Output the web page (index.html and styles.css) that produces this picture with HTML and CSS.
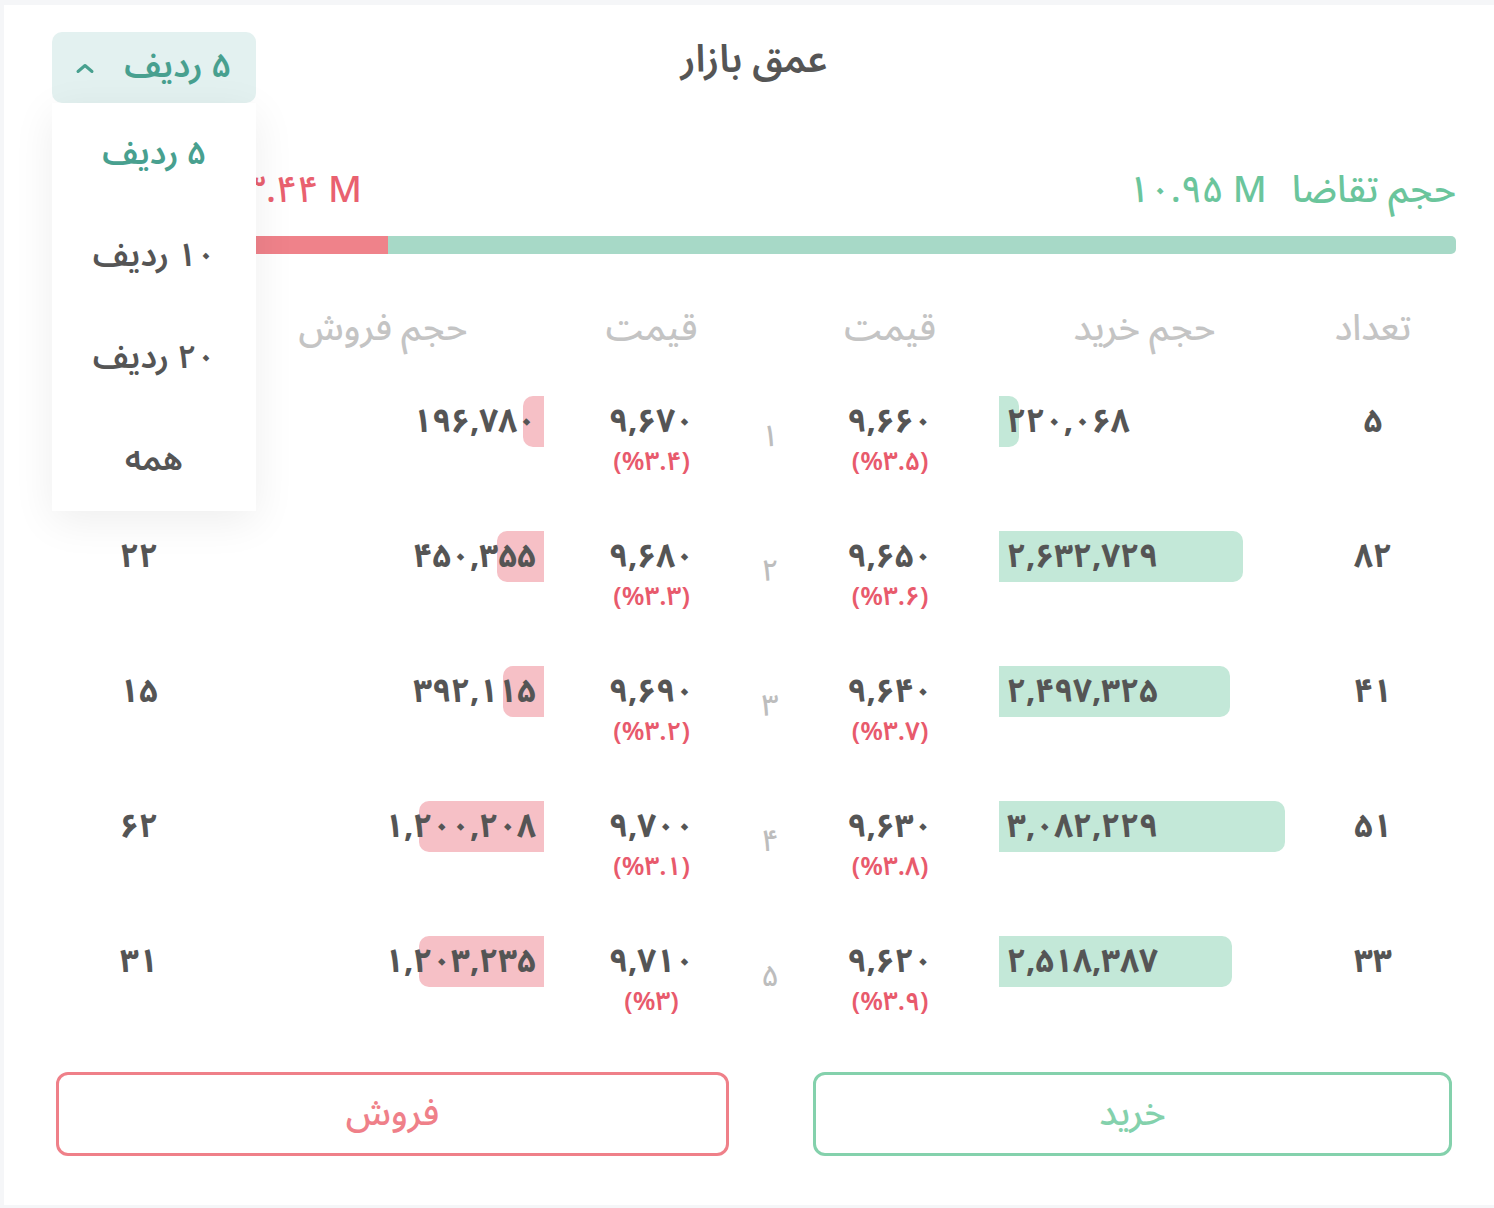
FILE: index.html
```html
<!DOCTYPE html>
<html lang="fa" dir="rtl">
<head>
<meta charset="utf-8">
<title>عمق بازار</title>
<link rel="stylesheet" href="styles.css">
</head>
<body>
<div class="card">
  <header class="head">
    <div class="head-side"></div>
    <h1 class="title">عمق بازار</h1>
    <div class="rows-select">
      <button class="select-btn" type="button">
        <span>۵ ردیف</span>
        <svg class="chev" width="20" height="12" viewBox="0 0 20 12"><polyline points="3,9.5 10,3.5 17,9.5" fill="none" stroke="#48a08f" stroke-width="3" stroke-linecap="round" stroke-linejoin="round"/></svg>
      </button>
      <ul class="menu">
        <li class="menu-item active">۵ ردیف</li>
        <li class="menu-item">۱۰ ردیف</li>
        <li class="menu-item">۲۰ ردیف</li>
        <li class="menu-item">همه</li>
      </ul>
    </div>
  </header>

  <div class="content">
    <div class="stats">
      <div class="stat stat-buy"><span class="stat-label">حجم تقاضا</span><span class="stat-val" dir="ltr">۱۰.۹۵ M</span></div>
      <div class="stat stat-sell"><span class="stat-label">حجم عرضه</span><span class="stat-val" dir="ltr">۳.۴۴ M</span></div>
    </div>

    <div class="ratio">
      <div class="ratio-buy" style="width:76.3%"></div>
      <div class="ratio-sell"></div>
    </div>

    <div class="grid thead">
      <div class="th">تعداد</div>
      <div class="th">حجم خرید</div>
      <div class="th">قیمت</div>
      <div class="th"></div>
      <div class="th">قیمت</div>
      <div class="th">حجم فروش</div>
      <div class="th">تعداد</div>
    </div>

    <div class="rows">
      <div class="grid row">
        <div class="c-count">۵</div>
        <div class="c-vol buy"><div class="fill" style="width:20px"></div><span class="num">۲۲۰,۰۶۸</span></div>
        <div class="c-price"><span class="v">۹,۶۶۰</span><span class="p" dir="ltr">(%۳.۵)</span></div>
        <div class="c-idx">۱</div>
        <div class="c-price"><span class="v">۹,۶۷۰</span><span class="p" dir="ltr">(%۳.۴)</span></div>
        <div class="c-vol sell"><div class="fill" style="width:21px"></div><span class="num">۱۹۶,۷۸۰</span></div>
        <div class="c-count">۸</div>
      </div>
      <div class="grid row">
        <div class="c-count">۸۲</div>
        <div class="c-vol buy"><div class="fill" style="width:244px"></div><span class="num">۲,۶۳۲,۷۲۹</span></div>
        <div class="c-price"><span class="v">۹,۶۵۰</span><span class="p" dir="ltr">(%۳.۶)</span></div>
        <div class="c-idx">۲</div>
        <div class="c-price"><span class="v">۹,۶۸۰</span><span class="p" dir="ltr">(%۳.۳)</span></div>
        <div class="c-vol sell"><div class="fill" style="width:47px"></div><span class="num">۴۵۰,۳۵۵</span></div>
        <div class="c-count">۲۲</div>
      </div>
      <div class="grid row">
        <div class="c-count">۴۱</div>
        <div class="c-vol buy"><div class="fill" style="width:231px"></div><span class="num">۲,۴۹۷,۳۲۵</span></div>
        <div class="c-price"><span class="v">۹,۶۴۰</span><span class="p" dir="ltr">(%۳.۷)</span></div>
        <div class="c-idx">۳</div>
        <div class="c-price"><span class="v">۹,۶۹۰</span><span class="p" dir="ltr">(%۳.۲)</span></div>
        <div class="c-vol sell"><div class="fill" style="width:41px"></div><span class="num">۳۹۲,۱۱۵</span></div>
        <div class="c-count">۱۵</div>
      </div>
      <div class="grid row">
        <div class="c-count">۵۱</div>
        <div class="c-vol buy"><div class="fill" style="width:286px"></div><span class="num">۳,۰۸۲,۲۲۹</span></div>
        <div class="c-price"><span class="v">۹,۶۳۰</span><span class="p" dir="ltr">(%۳.۸)</span></div>
        <div class="c-idx">۴</div>
        <div class="c-price"><span class="v">۹,۷۰۰</span><span class="p" dir="ltr">(%۳.۱)</span></div>
        <div class="c-vol sell"><div class="fill" style="width:125px"></div><span class="num">۱,۲۰۰,۲۰۸</span></div>
        <div class="c-count">۶۲</div>
      </div>
      <div class="grid row">
        <div class="c-count">۳۳</div>
        <div class="c-vol buy"><div class="fill" style="width:233px"></div><span class="num">۲,۵۱۸,۳۸۷</span></div>
        <div class="c-price"><span class="v">۹,۶۲۰</span><span class="p" dir="ltr">(%۳.۹)</span></div>
        <div class="c-idx">۵</div>
        <div class="c-price"><span class="v">۹,۷۱۰</span><span class="p" dir="ltr">(%۳)</span></div>
        <div class="c-vol sell"><div class="fill" style="width:125px"></div><span class="num">۱,۲۰۳,۲۳۵</span></div>
        <div class="c-count">۳۱</div>
      </div>
    </div>

    <div class="actions">
      <button class="act act-buy" type="button">خرید</button>
      <button class="act act-sell" type="button">فروش</button>
    </div>
  </div>
</div>
</body>
</html>
```

FILE: styles.css
```css
* { box-sizing: border-box; }

html, body {
  margin: 0;
  padding: 0;
}

body {
  background: #f5f6f8;
  font-family: "Noto Sans Arabic", "Vazirmatn", "DejaVu Sans", sans-serif;
  color: #555555;
}

.card {
  background: #ffffff;
  margin: 5px 0 0 4px;
  width: 1490px;
  height: 1200px;
  padding: 27px 38px 0 48px;
}

/* header */
.head {
  display: grid;
  grid-template-columns: 1fr auto 1fr;
  align-items: center;
  height: 71px;
}

.title {
  margin: 0;
  font-size: 38px;
  font-weight: 600;
  color: #555555;
  line-height: 48px;
  padding-bottom: 16px;
}

.rows-select {
  justify-self: end;
  position: relative;
  width: 204px;
  height: 71px;
}

.select-btn {
  width: 204px;
  height: 71px;
  border: 0;
  border-radius: 10px;
  background: #e3f1f0;
  display: flex;
  align-items: center;
  justify-content: space-between;
  padding: 0 25px 4px 23px;
  font-family: inherit;
  font-size: 34px;
  font-weight: 600;
  color: #48a08f;
}

.chev { display: block; margin-top: 4px; }

.menu {
  position: absolute;
  top: 71px;
  left: 0;
  width: 204px;
  margin: 0;
  padding: 0;
  list-style: none;
  background: #ffffff;
  box-shadow: 0 10px 40px rgba(0, 0, 0, 0.07);
  z-index: 5;
}

.menu-item {
  height: 102px;
  line-height: 102px;
  text-align: center;
  font-size: 33px;
  font-weight: 600;
  color: #555555;
}

.menu-item.active { color: #48a08f; }

/* content */
.content {
  padding-left: 4px;
}

.stats {
  margin-top: 63px;
  height: 48px;
  display: flex;
  justify-content: space-between;
  align-items: center;
  font-size: 37px;
  font-weight: 500;
  line-height: 48px;
}

.stat {
  display: flex;
  gap: 25px;
  align-items: center;
}

.stat-buy { color: #6bc59c; }
.stat-sell { color: #e9616f; flex-direction: row-reverse; }

.ratio {
  margin-top: 22px;
  height: 18px;
  display: flex;
  border-radius: 5px;
  overflow: hidden;
}

.ratio-buy { background: #a7d9c7; }
.ratio-sell { background: #ef828a; flex: 1; }

/* table */
.grid {
  display: grid;
  grid-template-columns: 166px 291px 218px 22px 215px 322px 166px;
}

.thead {
  margin-top: 52px;
  height: 48px;
  line-height: 46px;
  font-size: 36px;
  font-weight: 500;
  color: #c4c4c4;
  text-align: center;
}

.rows {
  margin-top: 42px;
  display: flex;
  flex-direction: column;
  gap: 54px;
}

.row {
  height: 81px;
  font-size: 33px;
  font-weight: 700;
  color: #555555;
}

.c-count {
  text-align: center;
  line-height: 51px;
}

.c-vol {
  position: relative;
  height: 51px;
  line-height: 51px;
}

.c-vol .fill {
  position: absolute;
  top: 0;
  bottom: 0;
}

.c-vol .num {
  position: relative;
  z-index: 1;
}

.c-vol.buy { text-align: left; padding-left: 8px; }
.c-vol.buy .fill { left: 0; background: #c3e8d8; border-radius: 0 10px 10px 0; }

.c-vol.sell { text-align: right; padding-right: 8px; }
.c-vol.sell .fill { right: 0; background: #f6c0c6; border-radius: 10px 0 0 10px; }

.c-price {
  display: flex;
  flex-direction: column;
  align-items: center;
}

.c-price .v { line-height: 51px; }

.c-price .p {
  line-height: 30px;
  font-size: 26px;
  font-weight: 600;
  color: #e85a6c;
}

.c-idx {
  display: flex;
  align-items: center;
  justify-content: center;
  font-size: 30px;
  font-weight: 500;
  color: #bdbdbd;
}

/* actions */
.actions {
  margin-top: 55px;
  display: flex;
  gap: 84px;
  padding-right: 4px;
}

.act {
  height: 84px;
  background: #ffffff;
  border-radius: 12px;
  border: 3px solid;
  font-family: inherit;
  font-size: 36px;
  font-weight: 500;
  padding-bottom: 6px;
}

.act-buy {
  width: 639px;
  border-color: #84d1ac;
  color: #84d1ac;
}

.act-sell {
  flex: 1;
  border-color: #ef8089;
  color: #ef8089;
}
```
